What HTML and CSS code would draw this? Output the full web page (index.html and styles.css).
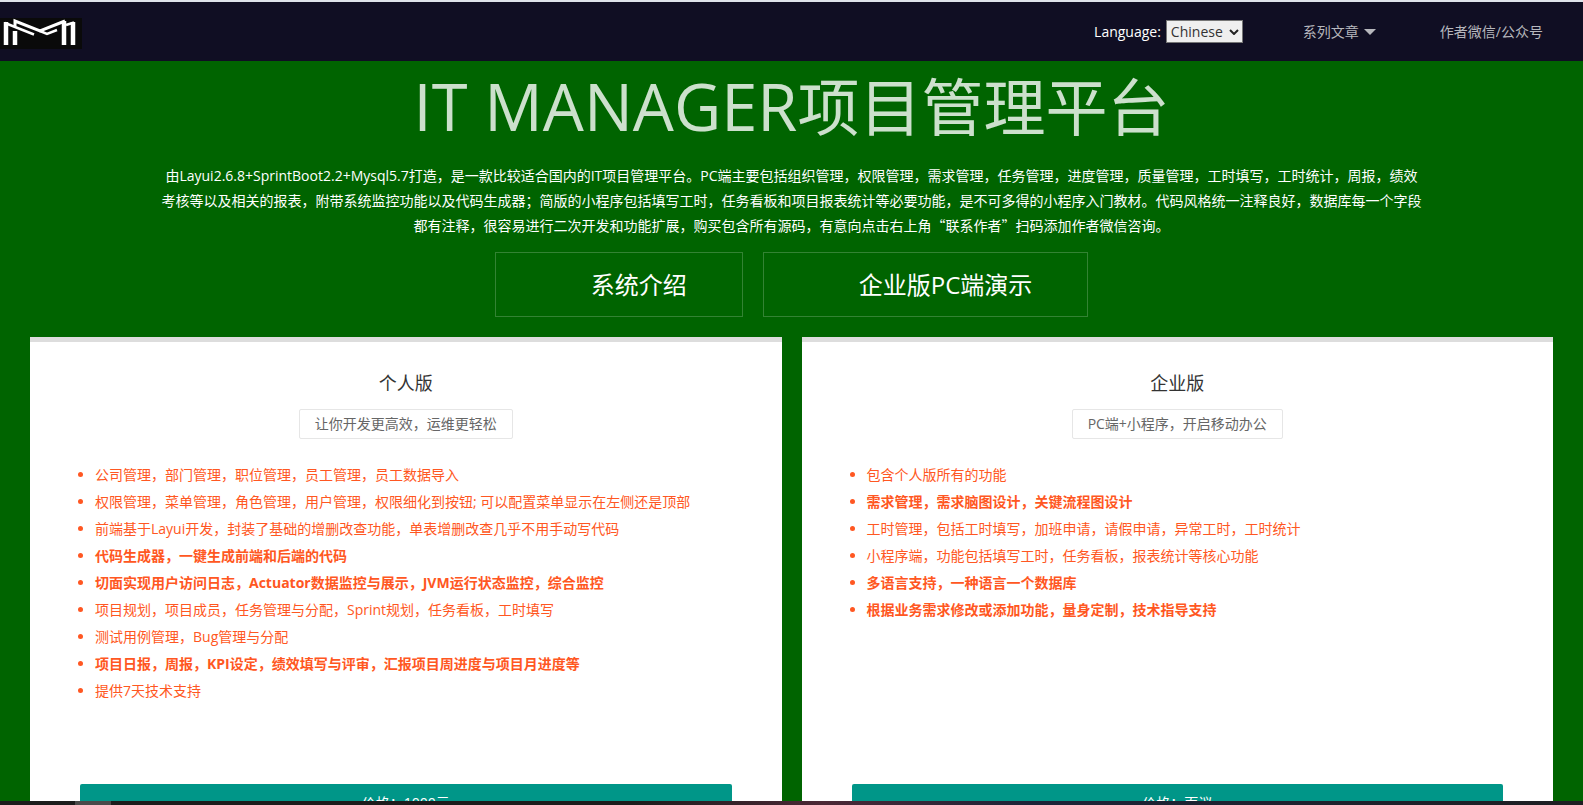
FILE: index.html
```html
<!DOCTYPE html>
<html lang="zh-CN">
<head>
<meta charset="utf-8">
<title>IT MANAGER项目管理平台</title>
<link rel="stylesheet" href="styles.css">
</head>
<body>
<header class="header">
  <a class="logo" href="#" aria-label="IT Manager">
    <svg viewBox="0 0 82 31" width="82" height="31" aria-hidden="true">
      <rect width="82" height="31" fill="#0a0a0a"/>
      <g class="logo-mark" fill="none" stroke="#fff">
        <path d="M6 27V4" stroke-width="4.500"/>
        <path d="M15 27V13" stroke-width="4.500"/>
        <path d="M64 27V3" stroke-width="4.500"/>
        <path d="M73 27V4" stroke-width="4.500"/>
        <path d="M5 5L34 16.500" stroke-width="2.500"/>
        <path d="M15 8V3L40 13L65 3" stroke-width="3"/>
        <path d="M40 13L47 16L57 12" stroke-width="2.500"/>
        <path d="M66 7L74 4.500" stroke-width="2.500"/>
      </g>
    </svg>
  </a>
  <nav class="nav">
    <div class="language">
      <label for="language">Language:</label>
      <span class="select-wrap">
        <select id="language"><option>Chinese</option><option>English</option></select>
        <svg class="chevron" viewBox="0 0 10 6" width="10" height="6" aria-hidden="true"><path d="M1 1L5 5L9 1" fill="none" stroke="#222" stroke-width="2"/></svg>
      </span>
    </div>
    <a class="nav-link" href="#">系列文章<span class="caret"></span></a>
    <a class="nav-link" href="#">作者微信/公众号</a>
  </nav>
</header>
<main class="main">
  <h1 class="title"><span class="title-latin">IT MANAGER</span>项目管理平台</h1>
  <p class="intro">由Layui2.6.8+SprintBoot2.2+Mysql5.7打造，是一款比较适合国内的IT项目管理平台。PC端主要包括组织管理，权限管理，需求管理，任务管理，进度管理，质量管理，工时填写，工时统计，周报，绩效考核等以及相关的报表，附带系统监控功能以及代码生成器；简版的小程序包括填写工时，任务看板和项目报表统计等必要功能，是不可多得的小程序入门教材。代码风格统一注释良好，数据库每一个字段都有注释，很容易进行二次开发和功能扩展，购买包含所有源码，有意向点击右上角<span class="cjk">“联系作者”</span>扫码添加作者微信咨询。</p>
  <div class="actions">
    <a class="action" href="#">系统介绍</a>
    <a class="action" href="#">企业版PC端演示</a>
  </div>
  <div class="plans">
    <section class="plan">
      <h2 class="plan-title">个人版</h2>
      <p class="plan-tag">让你开发更高效，运维更轻松</p>
      <ul class="features">
        <li>公司管理，部门管理，职位管理，员工管理，员工数据导入</li>
        <li>权限管理，菜单管理，角色管理，用户管理，权限细化到按钮; 可以配置菜单显示在左侧还是顶部</li>
        <li>前端基于Layui开发，封装了基础的增删改查功能，单表增删改查几乎不用手动写代码</li>
        <li class="strong">代码生成器，一键生成前端和后端的代码</li>
        <li class="strong">切面实现用户访问日志，Actuator数据监控与展示，JVM运行状态监控，综合监控</li>
        <li>项目规划，项目成员，任务管理与分配，Sprint规划，任务看板，工时填写</li>
        <li>测试用例管理，Bug管理与分配</li>
        <li class="strong">项目日报，周报，KPI设定，绩效填写与评审，汇报项目周进度与项目月进度等</li>
        <li>提供7天技术支持</li>
      </ul>
      <button class="price" type="button">价格：1000元</button>
    </section>
    <section class="plan">
      <h2 class="plan-title">企业版</h2>
      <p class="plan-tag">PC端+小程序，开启移动办公</p>
      <ul class="features">
        <li>包含个人版所有的功能</li>
        <li class="strong">需求管理，需求脑图设计，关键流程图设计</li>
        <li>工时管理，包括工时填写，加班申请，请假申请，异常工时，工时统计</li>
        <li>小程序端，功能包括填写工时，任务看板，报表统计等核心功能</li>
        <li class="strong">多语言支持，一种语言一个数据库</li>
        <li class="strong">根据业务需求修改或添加功能，量身定制，技术指导支持</li>
      </ul>
      <button class="price" type="button">价格：面议</button>
    </section>
  </div>
</main>
<footer class="taskbar"><span class="taskbar-item"></span></footer>
</body>
</html>
```

FILE: styles.css
```css
* {
  box-sizing: border-box;
}

body {
  margin: 0;
  height: 100vh;
  display: flex;
  flex-direction: column;
  overflow: hidden;
  background: #006400;
  color: #fff;
  font: 14px/24px "Open Sans", "Noto Sans CJK SC", sans-serif;
}

h1, h2, p, ul {
  margin: 0;
  padding: 0;
  font-weight: 400;
}

a {
  color: inherit;
  text-decoration: none;
}

.cjk {
  font-family: "Noto Sans CJK SC", sans-serif;
}

.header {
  flex: none;
  display: flex;
  align-items: center;
  justify-content: space-between;
  height: 61px;
  padding-right: 40px;
  border-top: 2px solid #dfe3ea;
  background: #100e23;
}

.logo {
  display: flex;
  padding-top: 4px;
}

.logo-mark {
  filter: blur(0.5px);
}

.nav {
  display: flex;
  align-items: center;
}

.language {
  display: flex;
  align-items: center;
  gap: 5px;
  margin-right: 60px;
}

.select-wrap {
  position: relative;
  display: flex;
}

.select-wrap select {
  appearance: none;
  width: 77px;
  height: 23px;
  padding: 0 4px;
  border: 1px solid #767676;
  border-radius: 0;
  background: #efefef;
  color: #333;
  font: 14px/20px "Open Sans", sans-serif;
}

.chevron {
  position: absolute;
  right: 4px;
  top: 9px;
  pointer-events: none;
}

.nav-link {
  display: flex;
  align-items: center;
  gap: 5px;
  color: #b7b7bd;
}

.nav-link + .nav-link {
  margin-left: 64px;
}

.caret {
  border: 6px solid transparent;
  border-top-color: #b7b7bd;
  border-bottom: 0;
}

.main {
  flex: 1;
  min-height: 0;
  overflow: hidden;
  padding: 0 30px;
}

.title {
  margin: 3px 0 14px;
  color: #cce0cc;
  font-size: 62px;
  line-height: 84px;
  text-align: center;
}

.title-latin {
  font-size: 65px;
}

.intro {
  width: 83%;
  margin: 0 auto;
  line-height: 25px;
  text-align: center;
}

.actions {
  display: flex;
  justify-content: center;
  gap: 20px;
  margin: 14px 0 20px;
}

.action {
  padding: 1px 55px 0 95px;
  border: 1px solid #338333;
  font-size: 24px;
  line-height: 62px;
}

.plans {
  display: grid;
  grid-template-columns: 1fr 1fr;
  gap: 20px;
}

.plan {
  display: flex;
  flex-direction: column;
  align-items: center;
  padding: 26px 50px 50px;
  border-top: 5px solid #ddd;
  background: #fff;
}

.plan-title {
  margin-bottom: 11px;
  color: #333;
  font-size: 18px;
  line-height: 30px;
}

.plan-tag {
  padding: 0 15px;
  border: 1px solid #e6e6e6;
  border-radius: 2px;
  color: #666;
  line-height: 28px;
}

.features {
  align-self: stretch;
  height: 300px;
  margin: 22px 0 23px;
  padding-left: 15px;
  color: #ff5722;
  line-height: 27px;
}

.strong {
  font-weight: 700;
}

.price {
  align-self: stretch;
  height: 38px;
  border: 0;
  border-radius: 2px;
  background: #009688;
  color: #fff;
  font: inherit;
}

.taskbar {
  flex: none;
  height: 4px;
  padding-left: 75px;
  background: linear-gradient(90deg, #1c1c1c 0 40%, #4c2836 52%, #1c2438 65%, #1e1e22 100%);
}

.taskbar-item {
  display: block;
  width: 36px;
  height: 4px;
  background: #4a4a4a;
}
```
